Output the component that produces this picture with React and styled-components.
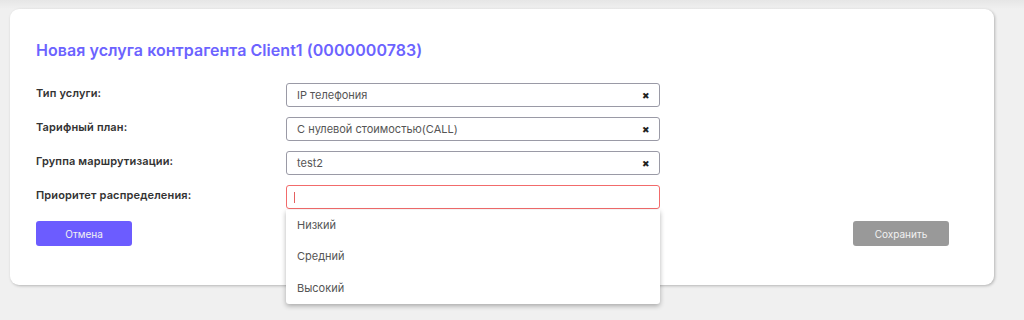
import React from "react";
import styled, { createGlobalStyle } from "styled-components";

const GlobalStyle = createGlobalStyle`
  html, body {
    margin: 0;
    padding: 0;
    background: #f0f0f0;
    font-family: "Inter", "Noto Sans", sans-serif;
  }
`;

const Page = styled.div`
  min-height: 320px;
  box-sizing: border-box;
  padding: 9px 30px 0 10px;
  background: linear-gradient(to bottom, #e6e6e6 0px, #f0f0f0 9px);
`;

const Card = styled.div`
  background: #fff;
  border-radius: 9px;
  box-shadow: 1px 1px 3px rgba(0, 0, 0, 0.25);
  padding: 31px 45px 39px 26px;
`;

const Title = styled.h2`
  margin: 0 0 23px;
  font-size: 16px;
  font-weight: 600;
  color: #6c63ff;
  letter-spacing: 0.05px;
`;

const Form = styled.div`
  display: flex;
  flex-direction: column;
  gap: 10px;
`;

const Row = styled.div`
  display: grid;
  grid-template-columns: 250px 374px;
  align-items: center;
`;

const Label = styled.div`
  font-size: 11px;
  font-weight: 600;
  color: #333;
  letter-spacing: 0.15px;
  margin-top: -4px;
`;

const Field = styled.div`
  position: relative;
  height: 24px;
  box-sizing: border-box;
  border: 1px solid ${(p) => (p.$error ? "#f26b6b" : "#9a9aa6")};
  border-radius: 3px;
  display: flex;
  align-items: center;
  padding: 0 9px 0 10px;
  font-size: 11px;
  color: #555;
`;

const Value = styled.span`
  flex: 1;
`;

const Caret = styled.span`
  width: 1px;
  height: 11px;
  background: #e46060;
  margin-left: -3px;
`;

const Clear = styled.span`
  font-size: 9px;
  color: #222;
  line-height: 1;
`;

const Menu = styled.div`
  position: absolute;
  top: 24px;
  left: -1px;
  right: -1px;
  background: #fff;
  border-radius: 0 0 3px 3px;
  box-shadow: 0 2px 5px rgba(0, 0, 0, 0.3);
  z-index: 2;
`;

const MenuItem = styled.div`
  height: 31.5px;
  display: flex;
  align-items: center;
  padding-left: 11px;
  font-size: 11px;
  color: #555;
  margin-top: ${(p) => (p.$first ? "-1px" : "0")};
`;

const Actions = styled.div`
  display: flex;
  justify-content: space-between;
  margin-top: 12px;
`;

const Button = styled.button`
  width: 96px;
  height: 25px;
  border: none;
  border-radius: 3px;
  background: ${(p) => (p.$primary ? "#6c5cff" : "#999")};
  color: #f2f2f2;
  font-family: inherit;
  font-size: 10px;
  cursor: pointer;
`;

const fields = [
  { label: "Тип услуги:", value: "IP телефония" },
  { label: "Тарифный план:", value: "С нулевой стоимостью(CALL)" },
  { label: "Группа маршрутизации:", value: "test2" },
];

const options = ["Низкий", "Средний", "Высокий"];

export default function App() {
  return (
    <Page>
      <GlobalStyle />
      <Card>
        <Title>Новая услуга контрагента Client1 (0000000783)</Title>
        <Form>
          {fields.map((f) => (
            <Row key={f.label}>
              <Label>{f.label}</Label>
              <Field>
                <Value>{f.value}</Value>
                <Clear>✖</Clear>
              </Field>
            </Row>
          ))}
          <Row>
            <Label>Приоритет распределения:</Label>
            <Field $error>
              <Caret />
              <Menu>
                {options.map((o, i) => (
                  <MenuItem key={o} $first={i === 0}>
                    {o}
                  </MenuItem>
                ))}
              </Menu>
            </Field>
          </Row>
        </Form>
        <Actions>
          <Button $primary>Отмена</Button>
          <Button>Сохранить</Button>
        </Actions>
      </Card>
    </Page>
  );
}
